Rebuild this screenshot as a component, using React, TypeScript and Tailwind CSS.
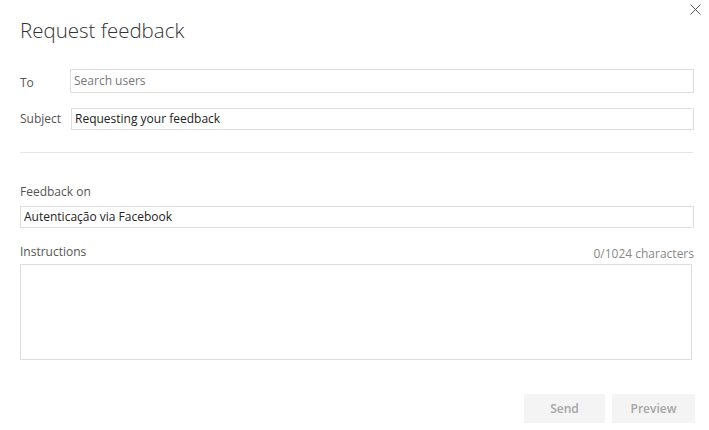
const font = { fontFamily: '"Open Sans", "Noto Sans", sans-serif' }

function Field({ value, placeholder }: { readonly value?: string; readonly placeholder?: string }): React.ReactElement {
  return (
    <div className="flex h-full w-full items-center border border-[#dedede] bg-white px-[3px] text-[12px]">
      {value ? (
        <span className="text-[#222]">{value}</span>
      ) : (
        <span className="text-[#777]">{placeholder}</span>
      )}
    </div>
  )
}

export default function App(): React.ReactElement {
  return (
    <div className="relative h-[430px] w-[709px] overflow-hidden bg-white" style={font}>
      {/* Close button */}
      <button className="absolute right-[8px] top-[4px] text-[#555]">
        <svg width="11" height="11" viewBox="0 0 11 11" fill="none" stroke="currentColor" strokeWidth="1">
          <path d="M0.5 0.5 L10.5 10.5 M10.5 0.5 L0.5 10.5" />
        </svg>
      </button>

      <div className="flex flex-col pl-[20px] pr-[15px]">
        <h1 className="mt-[15px] h-[30px] text-[20.5px] font-light leading-[30px] text-[#333]">
          Request feedback
        </h1>

        {/* Recipients */}
        <div className="mt-[24px] flex h-[24px] items-center">
          <label className="w-[50px] pt-[4px] text-[12px] text-[#555]">To</label>
          <div className="h-full flex-1">
            <Field placeholder="Search users" />
          </div>
        </div>
        <div className="mt-[15px] flex h-[22px] items-center">
          <label className="w-[51px] text-[12px] text-[#555]">Subject</label>
          <div className="h-full flex-1">
            <Field value="Requesting your feedback" />
          </div>
        </div>

        <div className="mr-[1px] mt-[22px] h-px bg-[#e6e6e6]" />

        {/* Feedback target */}
        <div className="mt-[31px] text-[12px] leading-[16px] text-[#555]">Feedback on</div>
        <div className="mt-[6px] h-[22px]">
          <Field value="Autenticação via Facebook" />
        </div>

        <div className="mt-[16px] flex h-[16px] items-end justify-between text-[12px] leading-[16px]">
          <span className="text-[#555]">Instructions</span>
          <span className="translate-y-[2px] text-[#888]">0/1024 characters</span>
        </div>
        <textarea className="mr-[2px] mt-[4px] h-[96px] resize-none border border-[#dedede] outline-none" />

        {/* Actions */}
        <div className="-mr-[1px] mt-[34px] flex justify-end gap-[7px] text-[12px] font-semibold text-[#a6a6a6]">
          <button className="h-[29px] w-[81px] bg-[#f4f4f4]">Send</button>
          <button className="h-[29px] w-[83px] bg-[#f4f4f4]">Preview</button>
        </div>
      </div>
    </div>
  )
}
